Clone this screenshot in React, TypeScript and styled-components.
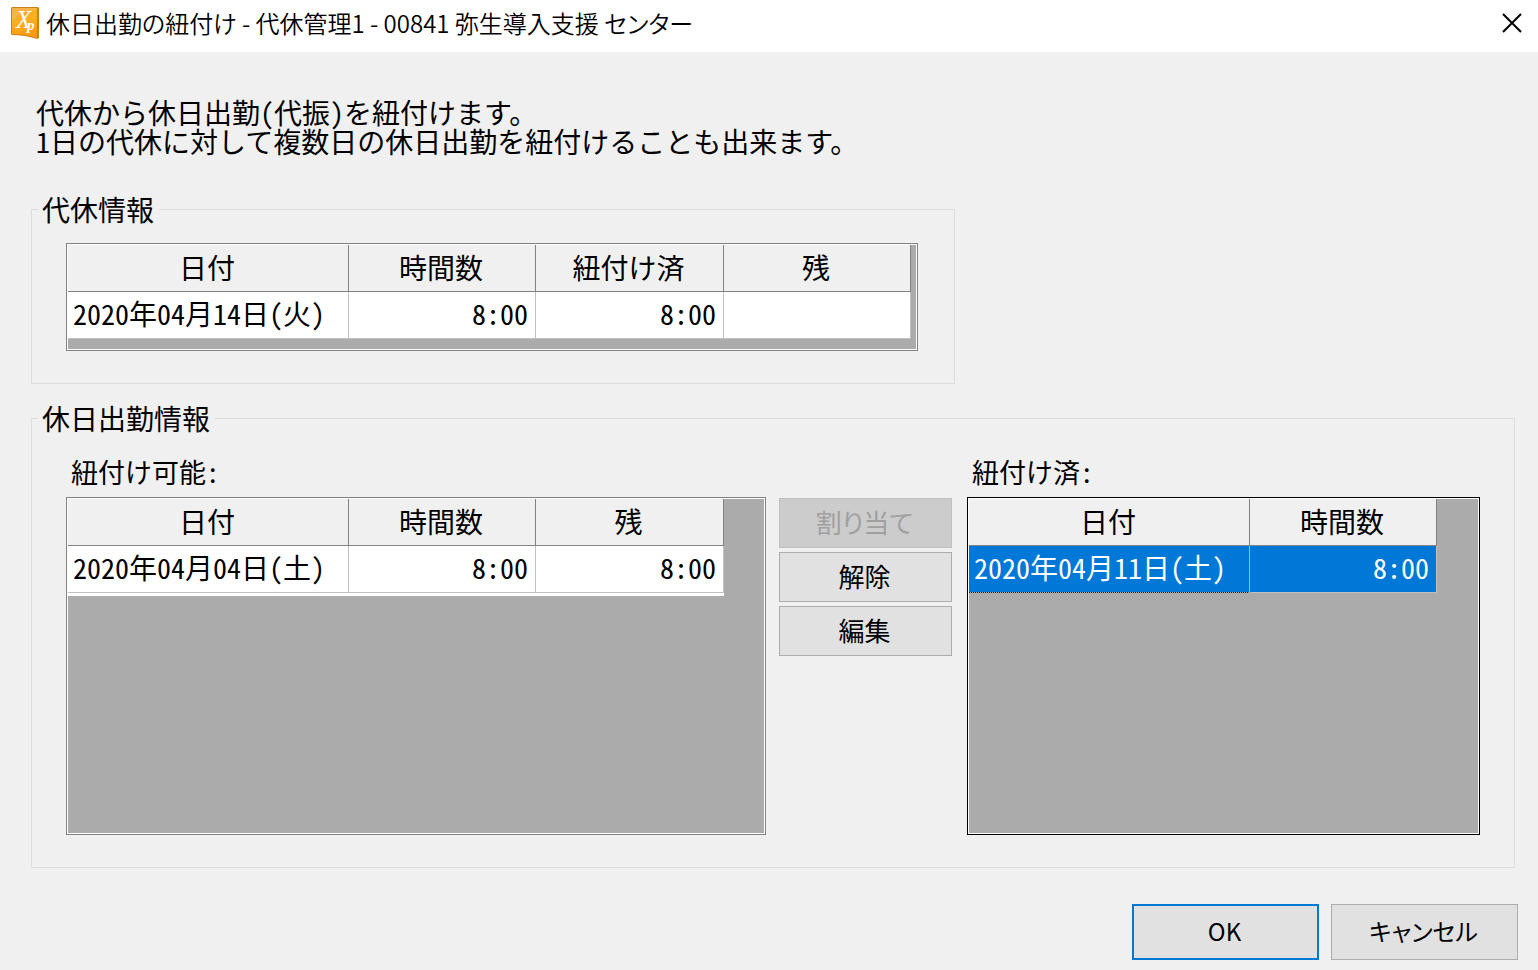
import React from "react";
import styled, { createGlobalStyle, css } from "styled-components";

const GlobalStyle = createGlobalStyle`
  *, *::before, *::after { box-sizing: border-box; }
  body {
    margin: 0;
    background: #f0f0f0;
    color: #000;
    font-family: "Noto Sans CJK JP", "Liberation Sans", sans-serif;
    font-size: 28px;
    line-height: 30px;
  }
`;

const halfWidth = css`
  font-feature-settings: "hwid";
`;

const proportional = css`
  font-feature-settings: "palt";
`;

const TitleBar = styled.header`
  display: flex;
  align-items: center;
  height: 52px;
  padding: 0 14px 6px 11px;
  background: #fff;
`;

const Title = styled.h1`
  ${proportional}
  flex: 1;
  margin: 0 0 0 7px;
  font-size: 24px;
  font-weight: 350;
  line-height: 30px;
  white-space: nowrap;
`;

const CloseButton = styled.button`
  display: flex;
  padding: 0;
  border: 0;
  background: none;
`;

const Content = styled.main`
  padding: 46px 23px 0 31px;
`;

const Description = styled.p`
  ${halfWidth}
  margin: 0 0 38px 5px;
  line-height: 29px;
`;

const Group = styled.fieldset<{ $fit?: boolean }>`
  width: ${(p) => (p.$fit ? "fit-content" : "auto")};
  min-width: 0;
  margin: 0 0 19px;
  padding: 0 ${(p) => (p.$fit ? "8px" : "6px")} 0 6px;
  border: 1px solid #dcdcdc;
`;

const GroupTitle = styled.legend`
  padding: 0 5px 0 4px;
  line-height: 30px;
`;

const GroupBody = styled.div<{ $top: number }>`
  display: flex;
  padding: ${(p) => p.$top}px 28px 32px;
`;

const Column = styled.section<{ $grow: number }>`
  flex: ${(p) => p.$grow} 1 0;
  min-width: 0;
`;

const ListLabel = styled.h2`
  ${halfWidth}
  margin: 0 0 10px 5px;
  font-size: 27px;
  font-weight: 400;
  line-height: 30px;
`;

const GridFrame = styled.div<{ $focused?: boolean; $tall?: boolean }>`
  height: ${(p) => (p.$tall ? "338px" : "auto")};
  padding: 1px;
  border: 1px solid ${(p) => (p.$focused ? "#000" : "#828282")};
  background: #fff;
`;

const GridArea = styled.div<{ $compact?: boolean }>`
  height: 100%;
  padding: ${(p) => (p.$compact ? "0 5px 10px 0" : "0")};
  background: #ababab;
`;

const Table = styled.table<{ $underline?: boolean }>`
  ${halfWidth}
  border-collapse: separate;
  border-spacing: 0;
  table-layout: fixed;
  width: min-content;
  border-bottom: ${(p) => (p.$underline ? "3px solid #fff" : "0")};
`;

const Col = styled.col<{ $width: number }>`
  width: ${(p) => p.$width}px;
`;

const HeadCell = styled.th`
  height: 47px;
  padding: 0 2px 2px 0;
  border-right: 1px solid #828282;
  border-bottom: 1px solid #828282;
  background: #f0f0f0;
  font-weight: 400;
`;

const Cell = styled.td<{ $right?: boolean; $selected?: boolean; $current?: boolean }>`
  height: 47px;
  padding: 0 7px 4px 5px;
  border-right: 1px solid #c0c0c0;
  border-bottom: 1px solid #c0c0c0;
  background: ${(p) => (p.$selected ? "#0078d7" : "#fff")};
  background-clip: padding-box;
  color: ${(p) => (p.$selected ? "#fff" : "#000")};
  text-align: ${(p) => (p.$right ? "right" : "left")};
  white-space: nowrap;
  ${(p) =>
    p.$current &&
    css`
      border-right: 1px dotted #9cc8ee;
      border-bottom: 1px dotted #222;
    `}
`;

const Actions = styled.div`
  display: flex;
  flex: none;
  flex-direction: column;
  gap: 4px;
  width: 173px;
  margin: 41px 15px 0 13px;
`;

const Button = styled.button<{ $primary?: boolean }>`
  ${proportional}
  height: 50px;
  padding: 0 2px 2px 0;
  border: ${(p) => (p.$primary ? "2px solid #0078d7" : "1px solid #adadad")};
  background: #e1e1e1;
  color: #000;
  font-family: inherit;
  font-size: 26px;
  line-height: 30px;

  &:disabled {
    border-color: #bfbfbf;
    background: #ccc;
    color: #a0a0a0;
  }
`;

const Footer = styled.footer`
  display: flex;
  justify-content: flex-end;
  gap: 12px;
  padding: 17px 20px 10px;
`;

const FooterButton = styled(Button)`
  width: 187px;
  height: 56px;
  font-size: 24px;
`;

interface ColumnDef {
  label: string;
  width: number;
}

interface GridProps {
  columns: ColumnDef[];
  row: string[];
  labelledBy: string;
  compact?: boolean;
  focused?: boolean;
  underline?: boolean;
}

function DataGrid({ columns, row, labelledBy, compact, focused, underline }: GridProps) {
  return (
    <GridFrame $focused={focused} $tall={!compact}>
      <GridArea $compact={compact}>
        <Table aria-labelledby={labelledBy} $underline={underline}>
          <colgroup>
            {columns.map((c) => (
              <Col key={c.label} $width={c.width} />
            ))}
          </colgroup>
          <thead>
            <tr>
              {columns.map((c) => (
                <HeadCell key={c.label} scope="col">
                  {c.label}
                </HeadCell>
              ))}
            </tr>
          </thead>
          <tbody>
            <tr>
              {row.map((value, i) => (
                <Cell key={i} $right={i > 0} $selected={focused} $current={focused && i === 0}>
                  {value}
                </Cell>
              ))}
            </tr>
          </tbody>
        </Table>
      </GridArea>
    </GridFrame>
  );
}

function AppIcon() {
  return (
    <svg width="28" height="32" viewBox="0 0 28 32" aria-hidden="true">
      <defs>
        <linearGradient id="face" x1="0" y1="0" x2="0.3" y2="1">
          <stop offset="0" stopColor="#f0a030" />
          <stop offset="0.5" stopColor="#fdb022" />
          <stop offset="1" stopColor="#ff9a10" />
        </linearGradient>
      </defs>
      <path d="M1 0H27L28 1V31L26 32Q14 28 1 28L0 27V1Z" fill="#c98213" />
      <path d="M1 1H26V31Q14 27 1 27Z" fill="url(#face)" />
      <path d="M1 1H26V3Q12 4 1 13Z" fill="#fff" opacity="0.15" />
      <text x="5" y="21" fill="#fff" fontFamily="Liberation Serif, serif" fontStyle="italic" fontSize="25">
        X
        <tspan x="16" y="23" fontSize="15" fontWeight="700">
          p
        </tspan>
      </text>
    </svg>
  );
}

const date = { label: "日付", width: 281 };
const hours = { label: "時間数", width: 187 };

export default function App() {
  return (
    <>
      <GlobalStyle />
      <TitleBar>
        <AppIcon />
        <Title>休日出勤の紐付け - 代休管理1 - 00841 弥生導入支援 センター</Title>
        <CloseButton type="button" aria-label="閉じる">
          <svg width="24" height="24" viewBox="0 0 24 24" aria-hidden="true">
            <path d="M3 3L21 21M21 3L3 21" stroke="#000" strokeWidth="2" />
          </svg>
        </CloseButton>
      </TitleBar>
      <Content>
        <Description>
          代休から休日出勤(代振)を紐付けます。
          <br />
          1日の代休に対して複数日の休日出勤を紐付けることも出来ます。
        </Description>
        <Group $fit>
          <GroupTitle id="leave">代休情報</GroupTitle>
          <GroupBody $top={19}>
            <DataGrid
              compact
              labelledBy="leave"
              columns={[date, hours, { label: "紐付け済", width: 188 }, { label: "残", width: 187 }]}
              row={["2020年04月14日(火)", "8:00", "8:00", ""]}
            />
          </GroupBody>
        </Group>
        <Group>
          <GroupTitle>休日出勤情報</GroupTitle>
          <GroupBody $top={24}>
            <Column $grow={700}>
              <ListLabel id="available">紐付け可能:</ListLabel>
              <DataGrid
                underline
                labelledBy="available"
                columns={[date, hours, { label: "残", width: 188 }]}
                row={["2020年04月04日(土)", "8:00", "8:00"]}
              />
            </Column>
            <Actions>
              <Button type="button" disabled>
                割り当て
              </Button>
              <Button type="button">解除</Button>
              <Button type="button">編集</Button>
            </Actions>
            <Column $grow={513}>
              <ListLabel id="linked">紐付け済:</ListLabel>
              <DataGrid
                focused
                labelledBy="linked"
                columns={[date, hours]}
                row={["2020年04月11日(土)", "8:00"]}
              />
            </Column>
          </GroupBody>
        </Group>
      </Content>
      <Footer>
        <FooterButton type="button" $primary>
          OK
        </FooterButton>
        <FooterButton type="button">キャンセル</FooterButton>
      </Footer>
    </>
  );
}
